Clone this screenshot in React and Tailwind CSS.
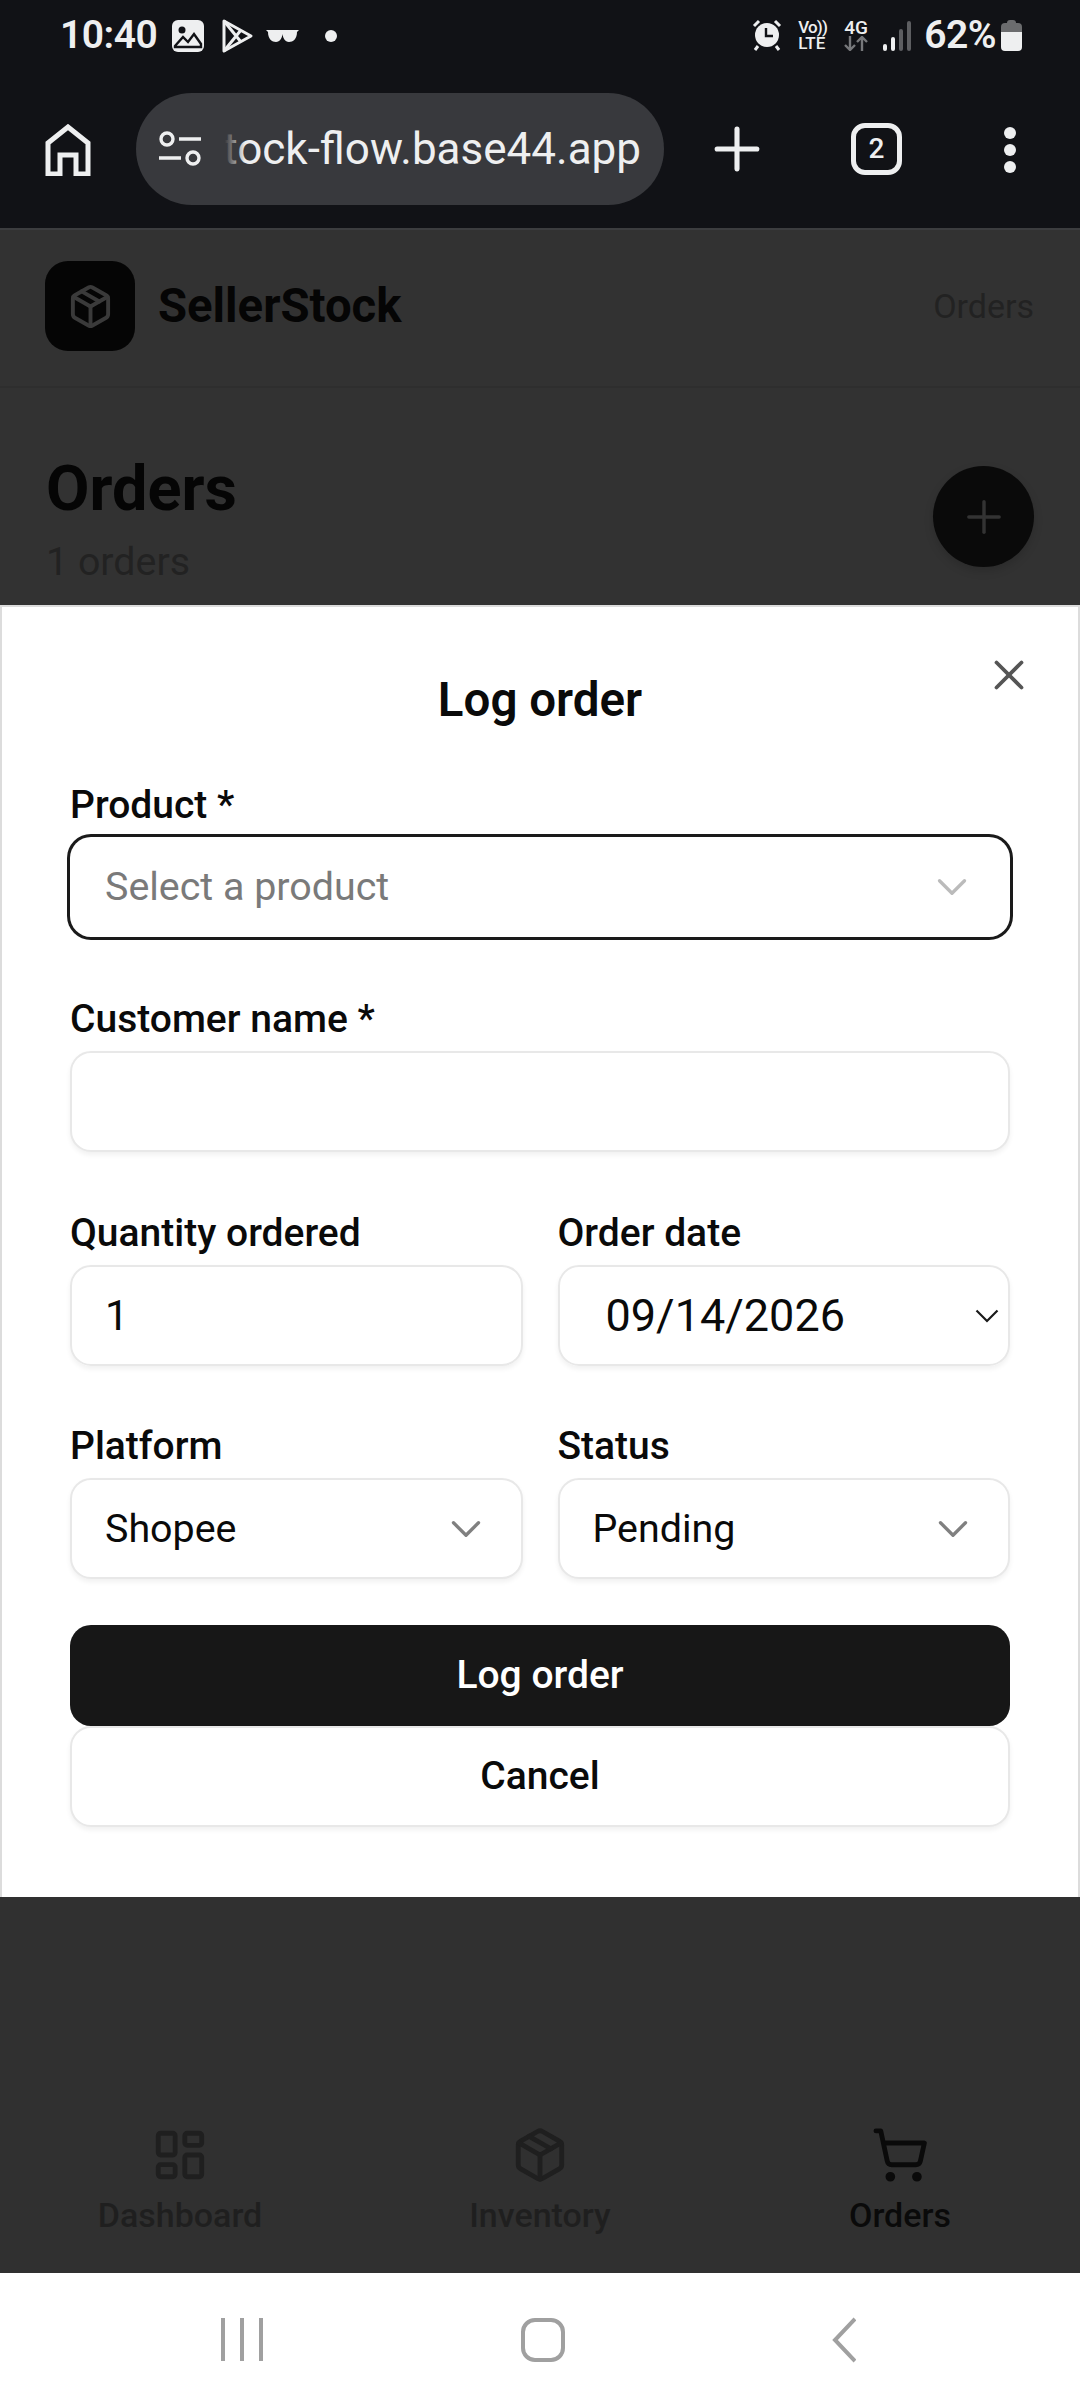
import { ChevronDown, LayoutDashboard, Package, Plus, ShoppingCart, X } from "lucide-react";

const NAV = [
  { label: "Dashboard", icon: LayoutDashboard, active: false },
  { label: "Inventory", icon: Package, active: false },
  { label: "Orders", icon: ShoppingCart, active: true },
];

function StatusBar() {
  return (
    <div className="flex h-[70px] items-start justify-between pl-[60px] pr-[58px] pt-[12px] text-[#eeeff0]">
      <div className="flex items-center">
        <span className="text-[39px] font-semibold leading-[46px] tracking-[-0.5px]">10:40</span>
        <svg className="ml-[15px] mt-[2px]" width="32" height="32" viewBox="0 0 32 32">
          <rect width="32" height="32" rx="6" fill="#eeeff0" />
          <circle cx="10" cy="10" r="3.5" fill="#111216" />
          <path d="M3 26 L11 17 L16 22 L22 14 L29 24 L29 27 L3 27 Z" fill="none" stroke="#111216" strokeWidth="2.4" />
        </svg>
        <svg className="ml-[17px] mt-[2px]" width="33" height="36" viewBox="0 0 33 36" fill="none" stroke="#eeeff0" strokeWidth="3" strokeLinejoin="round">
          <path d="M3 3 L30 18 L3 33 Z" />
          <path d="M3 3 L20 24 M3 33 L20 12" />
        </svg>
        <svg className="ml-[12px] mt-[2px]" width="33" height="14" viewBox="0 0 33 14" fill="#eeeff0">
          <path d="M0 1 H33 L31 3 C31 10 27 13 23 13 C19 13 17 9 16.5 5 C16 9 14 13 10 13 C6 13 2 10 2 3 Z" />
        </svg>
        <span className="ml-[26px] mt-[2px] h-[12px] w-[12px] rounded-full bg-[#eeeff0]" />
      </div>
      <div className="flex items-center">
        <svg width="30" height="32" viewBox="0 0 30 32" fill="#eeeff0">
          <circle cx="15" cy="16" r="12" />
          <path d="M14 9 V17 H21" fill="none" stroke="#111216" strokeWidth="2.4" />
          <path d="M2 7 L7 2 M28 7 L23 2 M6 27 L3 31 M24 27 L27 31" stroke="#eeeff0" strokeWidth="3" />
        </svg>
        <div className="ml-[16px] flex w-[33px] flex-col text-[17px] font-medium leading-[16px]">
          <span className="whitespace-nowrap tracking-[-0.8px]">Vo))</span>
          <span>LTE</span>
        </div>
        <div className="ml-[12px] flex w-[26px] flex-col items-center text-[19px] font-medium leading-[16px]">
          <span>4G</span>
          <svg width="26" height="15" viewBox="0 0 26 15" fill="none" stroke="#77787b" strokeWidth="2.4">
            <path d="M7 0 V14 M2 9 L7 14 L12 9 M19 15 V1 M14 6 L19 1 L24 6" />
          </svg>
        </div>
        <div className="ml-[14px] mt-[1px] flex h-[30px] items-end gap-[4px]">
          <span className="h-[7px] w-[4px] rounded-sm bg-[#eeeff0]" />
          <span className="h-[14px] w-[4px] rounded-sm bg-[#eeeff0]" />
          <span className="h-[22px] w-[4px] rounded-sm bg-[#5d5e61]" />
          <span className="h-[30px] w-[4px] rounded-sm bg-[#5d5e61]" />
        </div>
        <span className="ml-[13px] text-[39px] font-semibold leading-[46px] tracking-[-0.5px]">62%</span>
        <div className="ml-[5px] flex h-[31px] w-[21px] flex-col items-center">
          <span className="h-[3px] w-[9px] rounded-t-sm bg-[#6b6c6e]" />
          <span className="h-[9px] w-full rounded-t-[4px] bg-[#6b6c6e]" />
          <span className="h-[19px] w-full rounded-b-[4px] bg-[#eeeff0]" />
        </div>
      </div>
    </div>
  );
}

function Toolbar() {
  return (
    <div className="flex h-[160px] items-start border-b-2 border-[#3c3d3f] pl-[45px] pt-[23px] text-[#eeeff0]">
      <svg className="mt-[31px]" width="46" height="52" viewBox="0 0 46 52" fill="none" stroke="#eeeff0" strokeWidth="5">
        <path d="M3 50 V19 L23 3 L43 19 V50 H31 V31 H15 V50 Z" />
      </svg>
      <div className="relative ml-[45px] flex h-[112px] w-[528px] items-center overflow-hidden rounded-full bg-[#38393d] pl-[23px]">
        <svg width="42" height="36" viewBox="0 0 42 36" fill="none" stroke="#eeeff0" strokeWidth="3.4">
          <circle cx="8" cy="8" r="6" />
          <path d="M20 8 H42 M0 27 H22" />
          <circle cx="34" cy="27" r="6" />
        </svg>
        <div className="relative ml-[24px] w-[416px] overflow-hidden whitespace-nowrap text-right text-[44px] font-normal leading-[54px]">
          <span className="float-right">stock-flow.base44.app</span>
          <span className="absolute left-0 top-0 h-full w-[20px] bg-gradient-to-r from-[#38393d] to-transparent" />
        </div>
      </div>
      <Plus className="ml-[39px] mt-[22px]" size={68} strokeWidth={1.8} color="#eeeff0" />
      <div className="ml-[80px] mt-[30px] flex h-[52px] w-[51px] items-center justify-center rounded-[14px] border-[5px] border-[#eeeff0] text-[28px] font-medium">
        2
      </div>
      <div className="ml-[102px] mt-[34px] flex flex-col gap-[5px]">
        <span className="h-[12px] w-[12px] rounded-full bg-[#eeeff0]" />
        <span className="h-[12px] w-[12px] rounded-full bg-[#eeeff0]" />
        <span className="h-[12px] w-[12px] rounded-full bg-[#eeeff0]" />
      </div>
    </div>
  );
}

function Label({ children }) {
  return <div className="mb-[10px] h-[44px] text-[39px] font-medium leading-[44px] text-[#0a0a0a]">{children}</div>;
}

function SelectField({ label, value, placeholder, focused, className }) {
  return (
    <div className={className}>
      <Label>{label}</Label>
      <div
        className={
          focused
            ? "flex h-[100px] items-center justify-between rounded-[21px] bg-white pl-[35px] pr-[33px] shadow-[0_0_0_3px_#1a1a1a]"
            : "flex h-[101px] items-center justify-between rounded-[21px] border-[2px] border-[#e8e8e8] bg-white pl-[33px] pr-[30px] shadow-[0_3px_5px_rgba(0,0,0,0.06)]"
        }
      >
        <span className={placeholder ? "text-[39.4px] text-[#7a7a7a]" : "text-[39.4px] text-[#0a0a0a]"}>{value}</span>
        <ChevronDown size={50} strokeWidth={1.6} color={placeholder ? "#bbbbbb" : "#808080"} />
      </div>
    </div>
  );
}

function App() {
  return (
    <div className="flex h-[2408px] w-[1080px] flex-col overflow-hidden bg-[#323232] font-['Roboto',sans-serif]">
      <div className="bg-[#111216]">
        <StatusBar />
        <Toolbar />
      </div>

      <header className="flex h-[158px] items-center justify-between border-b-2 border-[#2e2e2e] pb-[4px] pl-[45px] pr-[46px]">
        <div className="flex items-center gap-[23px]">
          <div className="flex h-[90px] w-[90px] items-center justify-center rounded-[23px] bg-[#050505]">
            <Package size={47} strokeWidth={2} color="#3a3a3a" />
          </div>
          <span className="text-[47.25px] font-bold text-[#050505]">SellerStock</span>
        </div>
        <span className="text-[34px] text-[#222222]">Orders</span>
      </header>

      <div className="flex h-[217px] items-start justify-between pl-[46px] pr-[46px] pt-[63px]">
        <div>
          <h1 className="text-[63px] font-bold leading-[76px] text-[#050505]">Orders</h1>
          <p className="mt-[13px] text-[39.4px] leading-[44px] text-[#222222]">1 orders</p>
        </div>
        <div className="mt-[15px] flex h-[101px] w-[101px] items-center justify-center rounded-full bg-[#0a0a0a] shadow-[0_4px_10px_rgba(0,0,0,0.15)]">
          <Plus size={52} strokeWidth={1.6} color="#333333" />
        </div>
      </div>

      <div className="relative border-x-2 border-t-2 border-[#dcdcdc] bg-white pb-[70px] pl-[68px] pr-[68px] pt-[65px]">
        <X className="absolute right-[44px] top-[43px]" size={50} strokeWidth={1.8} color="#555555" />
        <h2 className="mb-[55px] h-[56px] text-center text-[47.5px] font-semibold leading-[56px] text-[#0a0a0a]">Log order</h2>

        <SelectField label="Product *" value="Select a product" placeholder focused />

        <div className="mt-[60px]">
          <Label>Customer name *</Label>
          <div className="h-[101px] rounded-[21px] border-[2px] border-[#e8e8e8] bg-white shadow-[0_3px_5px_rgba(0,0,0,0.06)]" />
        </div>

        <div className="mt-[59px] grid grid-cols-2 gap-x-[35px] gap-y-[58px]">
          <div>
            <Label>Quantity ordered</Label>
            <div className="flex h-[101px] items-center rounded-[21px] border-[2px] border-[#e8e8e8] pl-[33px] text-[42px] text-[#0a0a0a] shadow-[0_3px_5px_rgba(0,0,0,0.06)]">
              1
            </div>
          </div>
          <div>
            <Label>Order date</Label>
            <div className="flex h-[101px] items-center justify-between rounded-[21px] border-[2px] border-[#e8e8e8] pl-[46px] pr-[9px] text-[45px] text-[#0a0a0a] shadow-[0_3px_5px_rgba(0,0,0,0.06)]">
              09/14/2026
              <svg width="24" height="14" viewBox="0 0 24 14" fill="none" stroke="#1a1a1a" strokeWidth="2.2">
                <path d="M1.5 1.5 L12 12 L22.5 1.5" />
              </svg>
            </div>
          </div>
          <SelectField label="Platform" value="Shopee" />
          <SelectField label="Status" value="Pending" />
        </div>

        <button className="mt-[46px] block h-[101px] w-full rounded-[21px] bg-[#171717] text-[39px] font-medium text-white">Log order</button>
        <button className="block h-[101px] w-full rounded-[21px] border-[2px] border-[#e8e8e8] bg-white text-[39px] font-medium text-[#0a0a0a] shadow-[0_3px_5px_rgba(0,0,0,0.06)]">
          Cancel
        </button>
      </div>

      <div className="flex flex-1 flex-col justify-end bg-[#303030]">
        <nav className="grid h-[150px] grid-cols-3">
          {NAV.map((item) => (
            <div key={item.label} className={item.active ? "flex flex-col items-center pt-[3px] text-[#0a0a0a]" : "flex flex-col items-center pt-[3px] text-[#1f1f1f]"}>
              <item.icon size={58} strokeWidth={2} />
              <span className="mt-[11px] text-[34px] font-medium leading-[40px]">{item.label}</span>
            </div>
          ))}
        </nav>
      </div>

      <div className="flex h-[135px] items-center bg-white pb-[2px]">
        <div className="ml-[221px] flex gap-[15px]">
          <span className="h-[43px] w-[4px] bg-[#a0a0a0]" />
          <span className="h-[43px] w-[4px] bg-[#a0a0a0]" />
          <span className="h-[43px] w-[4px] bg-[#a0a0a0]" />
        </div>
        <div className="ml-[258px] h-[44px] w-[44px] rounded-[14px] border-[4px] border-[#a0a0a0]" />
        <svg className="ml-[267px]" width="24" height="46" viewBox="0 0 24 46" fill="none" stroke="#a0a0a0" strokeWidth="4">
          <path d="M23 2 L3 23 L23 44" />
        </svg>
      </div>
    </div>
  );
}

export default App;
